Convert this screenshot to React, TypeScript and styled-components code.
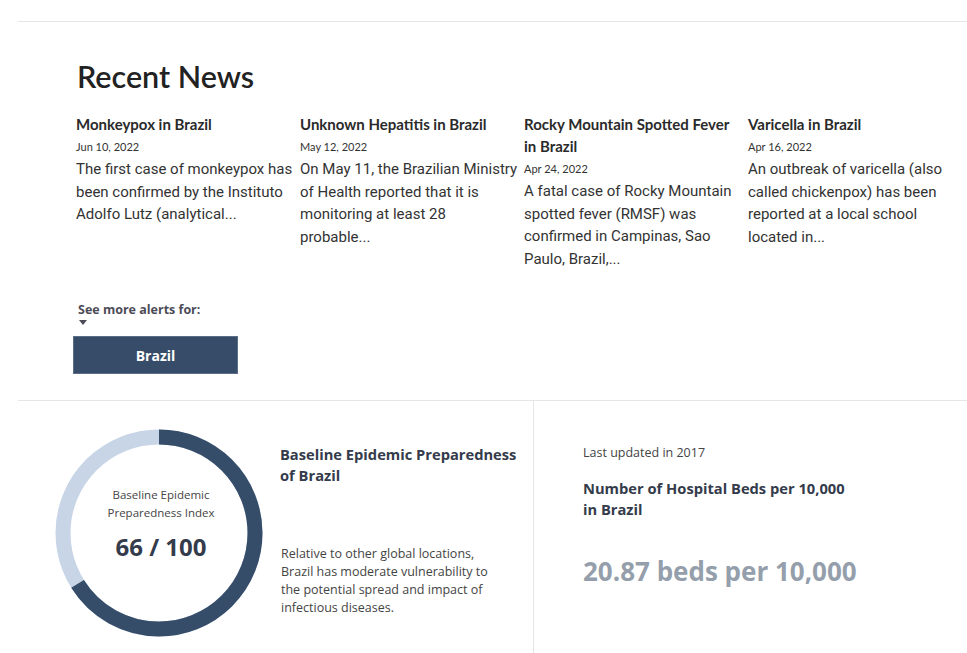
import styled, { createGlobalStyle } from "styled-components";

type NewsItem = {
  title: string;
  date: string;
  summary: string;
};

const news: NewsItem[] = [
  {
    title: "Monkeypox in Brazil",
    date: "Jun 10, 2022",
    summary:
      "The first case of monkeypox has been confirmed by the Instituto Adolfo Lutz (analytical...",
  },
  {
    title: "Unknown Hepatitis in Brazil",
    date: "May 12, 2022",
    summary:
      "On May 11, the Brazilian Ministry of Health reported that it is monitoring at least 28 probable...",
  },
  {
    title: "Rocky Mountain Spotted Fever in Brazil",
    date: "Apr 24, 2022",
    summary:
      "A fatal case of Rocky Mountain spotted fever (RMSF) was confirmed in Campinas, Sao Paulo, Brazil,...",
  },
  {
    title: "Varicella in Brazil",
    date: "Apr 16, 2022",
    summary:
      "An outbreak of varicella (also called chickenpox) has been reported at a local school located in...",
  },
];

const Donut = ({ score }: { score: number }) => {
  const r = 96;
  const c = 2 * Math.PI * r;
  const dash = (score / 100) * c;
  return (
    <StyledDonutSvg width="210" height="210" viewBox="0 0 210 210">
      <circle cx="105" cy="105" r={r} fill="none" stroke="#c8d5e6" strokeWidth="15" />
      <circle
        cx="105"
        cy="105"
        r={r}
        fill="none"
        stroke="#364d6a"
        strokeWidth="15"
        strokeDasharray={`${dash} ${c}`}
        transform="rotate(-90 105 105)"
      />
    </StyledDonutSvg>
  );
};

const App = () => {
  return (
    <>
      <GlobalStyle />
      <StyledPage>
        <StyledNewsSection>
          <StyledHeading>Recent News</StyledHeading>
          <StyledNewsGrid>
            {news.map((item) => (
              <StyledNewsCard key={item.title}>
                <StyledNewsTitle>{item.title}</StyledNewsTitle>
                <StyledNewsDate>{item.date}</StyledNewsDate>
                <StyledNewsSummary>{item.summary}</StyledNewsSummary>
              </StyledNewsCard>
            ))}
          </StyledNewsGrid>
          <StyledMoreLabel>See more alerts for:</StyledMoreLabel>
          <StyledCaret />
          <StyledCountryButton>Brazil</StyledCountryButton>
        </StyledNewsSection>
        <StyledStats>
          <StyledStatPanel>
            <StyledDonutWrap>
              <Donut score={66} />
              <StyledDonutCenter>
                <StyledDonutLabel>
                  Baseline Epidemic
                  <br />
                  Preparedness Index
                </StyledDonutLabel>
                <StyledDonutScore>66 / 100</StyledDonutScore>
              </StyledDonutCenter>
            </StyledDonutWrap>
            <StyledIndexText>
              <StyledStatTitle>Baseline Epidemic Preparedness of Brazil</StyledStatTitle>
              <StyledIndexDescription>
                Relative to other global locations, Brazil has moderate vulnerability to the
                potential spread and impact of infectious diseases.
              </StyledIndexDescription>
            </StyledIndexText>
          </StyledStatPanel>
          <StyledBedsPanel>
            <StyledUpdated>Last updated in 2017</StyledUpdated>
            <StyledStatTitle $maxWidth={276}>
              Number of Hospital Beds per 10,000 in Brazil
            </StyledStatTitle>
            <StyledBedsValue>20.87 beds per 10,000</StyledBedsValue>
          </StyledBedsPanel>
        </StyledStats>
      </StyledPage>
    </>
  );
};

const GlobalStyle = createGlobalStyle`
  html, body {
    margin: 0;
    padding: 0;
    background: #fff;
  }
  * {
    box-sizing: border-box;
  }
`;

const StyledPage = styled.div`
  width: 967px;
  height: 653px;
  overflow: hidden;
  padding: 21px 0 0 18px;
`;

const StyledNewsSection = styled.section`
  border-top: 1px solid #e6e6e6;
  padding: 36px 0 26px 58px;
  font-family: Lato, "Liberation Sans", sans-serif;
`;

const StyledHeading = styled.h2`
  margin: 0 0 19px 1px;
  font-size: 30.5px;
  line-height: 36px;
  font-weight: 600;
  color: #222;
`;

const StyledNewsGrid = styled.div`
  display: grid;
  grid-template-columns: repeat(4, 224px);
  margin-bottom: 32px;
`;

const StyledNewsCard = styled.article`
  display: flex;
  flex-direction: column;
  padding-right: 5.5px;
`;

const StyledNewsTitle = styled.h3`
  margin: 0;
  font-size: 15px;
  line-height: 22px;
  font-weight: 700;
  color: #2a2a2a;
`;

const StyledNewsDate = styled.span`
  margin: 2px 0 1px;
  font-size: 11px;
  line-height: 20px;
  color: #333;
`;

const StyledNewsSummary = styled.p`
  margin: 0;
  font-family: Roboto, "Liberation Sans", sans-serif;
  font-size: 15px;
  line-height: 22.5px;
  color: #333;
`;

const StyledMoreLabel = styled.div`
  margin-left: 2px;
  font-family: "Open Sans", "Noto Sans", sans-serif;
  font-size: 12.5px;
  line-height: 16px;
  font-weight: 700;
  color: #4c4c58;
`;

const StyledCaret = styled.div`
  margin: 2px 0 11px 3px;
  width: 0;
  height: 0;
  border-left: 4.5px solid transparent;
  border-right: 4.5px solid transparent;
  border-top: 5px solid #4c4c58;
`;

const StyledCountryButton = styled.button`
  margin-left: -3px;
  width: 165px;
  height: 38px;
  background: #374c68;
  border: 1px solid #5c6e86;
  color: #fff;
  font-family: "Open Sans", "Noto Sans", sans-serif;
  font-size: 14px;
  font-weight: 700;
  cursor: pointer;
`;

const StyledStats = styled.div`
  display: grid;
  grid-template-columns: 515px 1fr;
  border-top: 1px solid #e6e6e6;
  height: 260px;
  font-family: "Open Sans", "Noto Sans", sans-serif;
`;

const StyledStatPanel = styled.div`
  display: flex;
  align-items: flex-start;
  padding: 27px 0 0 36px;
  gap: 16px;
`;

const StyledDonutWrap = styled.div`
  position: relative;
  width: 210px;
  height: 210px;
  flex-shrink: 0;
`;

const StyledDonutSvg = styled.svg`
  display: block;
`;

const StyledDonutCenter = styled.div`
  position: absolute;
  inset: 0;
  display: flex;
  flex-direction: column;
  align-items: center;
  justify-content: center;
  padding: 0 0 18px 4px;
`;

const StyledDonutLabel = styled.div`
  font-size: 11.5px;
  line-height: 18px;
  color: #444;
  text-align: center;
`;

const StyledDonutScore = styled.div`
  margin-top: 10px;
  font-size: 24px;
  line-height: 30px;
  font-weight: 700;
  color: #343b4b;
`;

const StyledIndexText = styled.div`
  display: flex;
  flex-direction: column;
  padding-top: 16px;
  width: 245px;
`;

const StyledStatTitle = styled.h4<{ $maxWidth?: number }>`
  margin: 0;
  font-size: 14.7px;
  line-height: 21px;
  font-weight: 700;
  color: #343b4b;
  max-width: ${(p) => p.$maxWidth ?? 280}px;
`;

const StyledIndexDescription = styled.p`
  margin: 59px 0 0 1px;
  width: 220px;
  font-size: 12.5px;
  line-height: 18px;
  color: #444;
`;

const StyledBedsPanel = styled.div`
  border-left: 1px solid #e6e6e6;
  padding: 43px 0 0 49px;
  display: flex;
  flex-direction: column;
`;

const StyledUpdated = styled.div`
  font-size: 12.5px;
  line-height: 18px;
  color: #444;
  margin-bottom: 16px;
`;

const StyledBedsValue = styled.div`
  margin-top: 34px;
  font-size: 26px;
  line-height: 34px;
  font-weight: 700;
  color: #959fac;
`;

export default App;
